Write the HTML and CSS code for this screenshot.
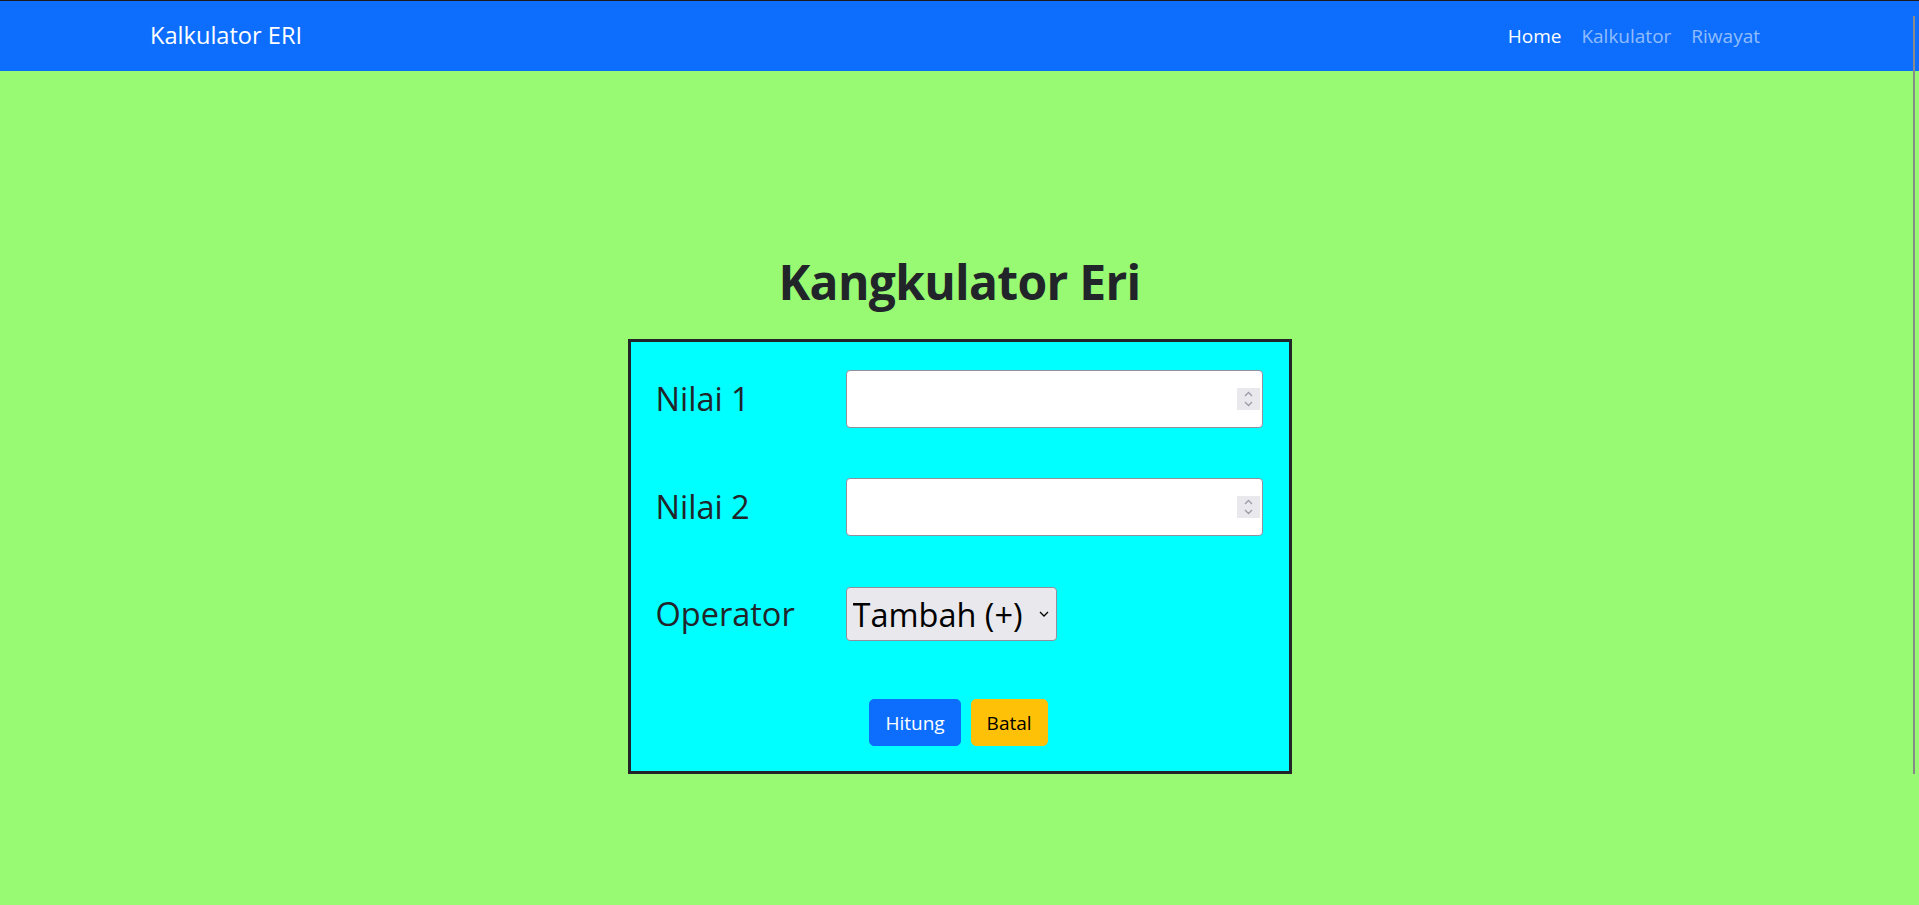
FILE: index.html
```html
<!DOCTYPE html>
<html lang="id">
<head>
<meta charset="utf-8">
<title>Kalkulator ERI</title>
<link rel="stylesheet" href="styles.css">
</head>
<body>
<nav class="navbar">
  <div class="nav-container">
    <a class="brand" href="#">Kalkulator ERI</a>
    <ul class="nav-links">
      <li><a class="nav-link active" href="#">Home</a></li>
      <li><a class="nav-link" href="#">Kalkulator</a></li>
      <li><a class="nav-link" href="#">Riwayat</a></li>
    </ul>
  </div>
</nav>

<main class="main">
  <h1 class="title">Kangkulator Eri</h1>
  <form class="calc-box">
    <div class="form-row row-1">
      <label class="form-label" for="n1">Nilai 1</label>
      <div class="num-wrap">
        <input class="num-input" type="number" id="n1">
        <span class="spinner">
          <svg width="23" height="22" viewBox="0 0 23 22"><path d="M8 8 L11.5 4.5 L15 8 M8 14 L11.5 17.5 L15 14" fill="none" stroke="#9b9ba8" stroke-width="1.3"/></svg>
        </span>
      </div>
    </div>
    <div class="form-row row-2">
      <label class="form-label" for="n2">Nilai 2</label>
      <div class="num-wrap">
        <input class="num-input" type="number" id="n2">
        <span class="spinner">
          <svg width="23" height="22" viewBox="0 0 23 22"><path d="M8 8 L11.5 4.5 L15 8 M8 14 L11.5 17.5 L15 14" fill="none" stroke="#9b9ba8" stroke-width="1.3"/></svg>
        </span>
      </div>
    </div>
    <div class="form-row row-3">
      <label class="form-label" for="op">Operator</label>
      <div class="select-wrap">
        <select class="op-select" id="op">
          <option>Tambah (+)</option>
          <option>Kurang (-)</option>
          <option>Kali (x)</option>
          <option>Bagi (/)</option>
        </select>
        <svg class="select-arrow" width="10" height="6" viewBox="0 0 10 6"><path d="M1 1 L5 5 L9 1" fill="none" stroke="#000" stroke-width="1.3"/></svg>
      </div>
    </div>
    <div class="btn-row">
      <button type="button" class="btn btn-primary">Hitung</button>
      <button type="reset" class="btn btn-warning">Batal</button>
    </div>
  </form>
</main>

<div class="scroll-thumb"></div>
</body>
</html>
```

FILE: styles.css
```css
* { box-sizing: border-box; }

html, body {
  margin: 0;
  padding: 0;
  height: 100%;
  overflow: hidden;
}

body {
  background: #97fa72;
  font-family: "Open Sans", "Noto Sans", sans-serif;
  color: #212529;
}

.navbar {
  background: #0d6efd;
  border-top: 1px solid #1b1b1b;
  height: 71px;
}

.nav-container {
  height: 70px;
  padding: 0 149px 0 150px;
  display: flex;
  align-items: center;
  justify-content: space-between;
}

.brand {
  color: #fff;
  text-decoration: none;
  font-size: 23.6px;
  line-height: 30px;
  margin-top: -2px;
}

.nav-links {
  list-style: none;
  margin: 0;
  padding: 0;
  display: flex;
}

.nav-link {
  display: block;
  padding: 0 10px;
  font-size: 19px;
  line-height: 28px;
  color: rgba(255, 255, 255, 0.55);
  text-decoration: none;
}

.nav-link.active { color: #fff; }

.main {
  display: flex;
  flex-direction: column;
  align-items: center;
  padding-top: 181px;
}

.title {
  margin: 0 0 27px;
  font-size: 48px;
  line-height: 60px;
  letter-spacing: -0.7px;
  font-weight: 700;
  color: #212529;
}

.calc-box {
  width: 664px;
  border: 3px solid #212529;
  background: #00ffff;
  padding: 28px 26px 25px 24px;
  display: flex;
  flex-direction: column;
}

.form-row {
  display: flex;
  align-items: center;
}

.row-1 { margin-bottom: 50px; }
.row-2 { margin-bottom: 51px; }
.row-3 { margin-bottom: 58px; }

.form-label {
  width: 191px;
  flex: none;
  font-size: 32.5px;
  line-height: 44px;
  padding-left: 1px;
  color: #212529;
}

.num-wrap {
  position: relative;
  flex: 1;
  height: 58px;
}

.num-input {
  width: 100%;
  height: 58px;
  border: 1px solid #8f8f9d;
  border-radius: 4px;
  background: #fff;
  font-size: 20px;
  -moz-appearance: textfield;
  appearance: textfield;
}

.num-input::-webkit-inner-spin-button,
.num-input::-webkit-outer-spin-button {
  -webkit-appearance: none;
  margin: 0;
}

.spinner {
  position: absolute;
  right: 3px;
  top: 18px;
  width: 23px;
  height: 22px;
  background: #e9e9ed;
  display: flex;
}

.select-wrap {
  position: relative;
  display: inline-block;
}

.op-select {
  appearance: none;
  -webkit-appearance: none;
  width: 211px;
  height: 54px;
  border: 1px solid #8f8f9d;
  border-radius: 4px;
  background: #e9e9ed;
  color: #000;
  font-family: "Open Sans", "Noto Sans", sans-serif;
  font-size: 32.5px;
  padding: 0 0 0 6px;
}

.select-arrow {
  position: absolute;
  right: 8px;
  top: 24px;
  pointer-events: none;
}

.btn-row {
  display: flex;
  justify-content: center;
  gap: 10px;
}

.btn {
  height: 47px;
  padding: 0 15px;
  border: 1px solid transparent;
  border-radius: 5px;
  font-family: "Open Sans", "Noto Sans", sans-serif;
  font-size: 19px;
  line-height: 28px;
}

.btn-primary {
  background: #0d6efd;
  border-color: #0d6efd;
  color: #fff;
}

.btn-warning {
  background: #ffc107;
  border-color: #ffc107;
  color: #000;
}

.scroll-thumb {
  position: fixed;
  left: 1913px;
  top: 16px;
  width: 2px;
  height: 758px;
  background: #8a8a8a;
}
```
